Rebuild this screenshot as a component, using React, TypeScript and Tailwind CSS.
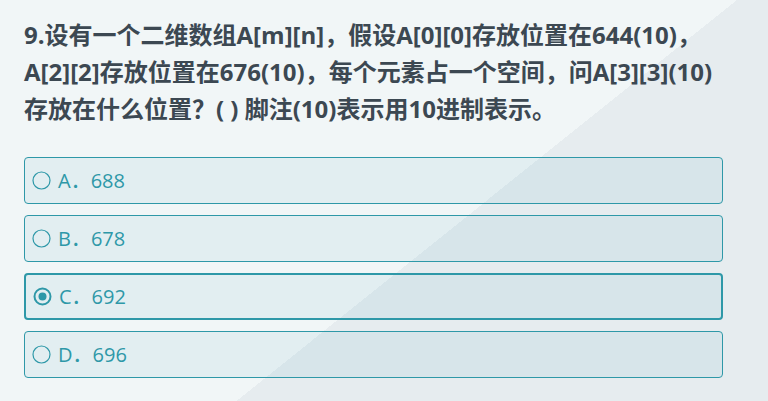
import { useState } from "react";

const options = [
	{ key: "A", value: "688" },
	{ key: "B", value: "678" },
	{ key: "C", value: "692" },
	{ key: "D", value: "696" },
];

const questionLines = [
	"9.设有一个二维数组A[m][n]，假设A[0][0]存放位置在644(10)，",
	"A[2][2]存放位置在676(10)，每个元素占一个空间，问A[3][3](10)",
	"存放在什么位置？( ) 脚注(10)表示用10进制表示。",
];

function Radio({ checked }: { checked: boolean }) {
	return (
		<svg width="19" height="19" viewBox="0 0 19 19" className="shrink-0">
			<circle
				cx="9.5"
				cy="9.5"
				r={checked ? 8 : 8.5}
				fill="none"
				stroke="#2e98a8"
				strokeWidth={checked ? 2 : 1.2}
			/>
			{checked && <circle cx="9.5" cy="9.5" r="4" fill="#2e98a8" />}
		</svg>
	);
}

export default function App() {
	const [selected, setSelected] = useState("C");

	return (
		<div
			className="h-screen w-full bg-[linear-gradient(141.3deg,#f1f6f7_58.1%,#e6ecef_58.1%)] pl-[24px] pr-[45px] pt-[16px]"
			style={{ fontFamily: '"Open Sans", "Noto Sans CJK SC", sans-serif' }}
		>
			<div className="text-[24px] leading-[37px] font-bold text-[#3c4852]">
				{questionLines.map((line) => (
					<div key={line} className="whitespace-nowrap">
						{line}
					</div>
				))}
			</div>

			<div className="mt-[30px] flex flex-col gap-[11px]">
				{options.map((o) => {
					const checked = selected === o.key;
					return (
						<button
							key={o.key}
							onClick={() => setSelected(o.key)}
							className={`flex h-[47px] w-full items-center gap-[7px] rounded-[4px] bg-[rgba(46,152,168,0.075)] pl-[7px] text-left text-[20px] text-[#2e98a8] ${
								checked ? "border-2 border-[#2e98a8] pl-[6px]" : "border border-[#2e98a8]"
							}`}
						>
							<Radio checked={checked} />
							<span>
								{o.key}．{o.value}
							</span>
						</button>
					);
				})}
			</div>
		</div>
	);
}
